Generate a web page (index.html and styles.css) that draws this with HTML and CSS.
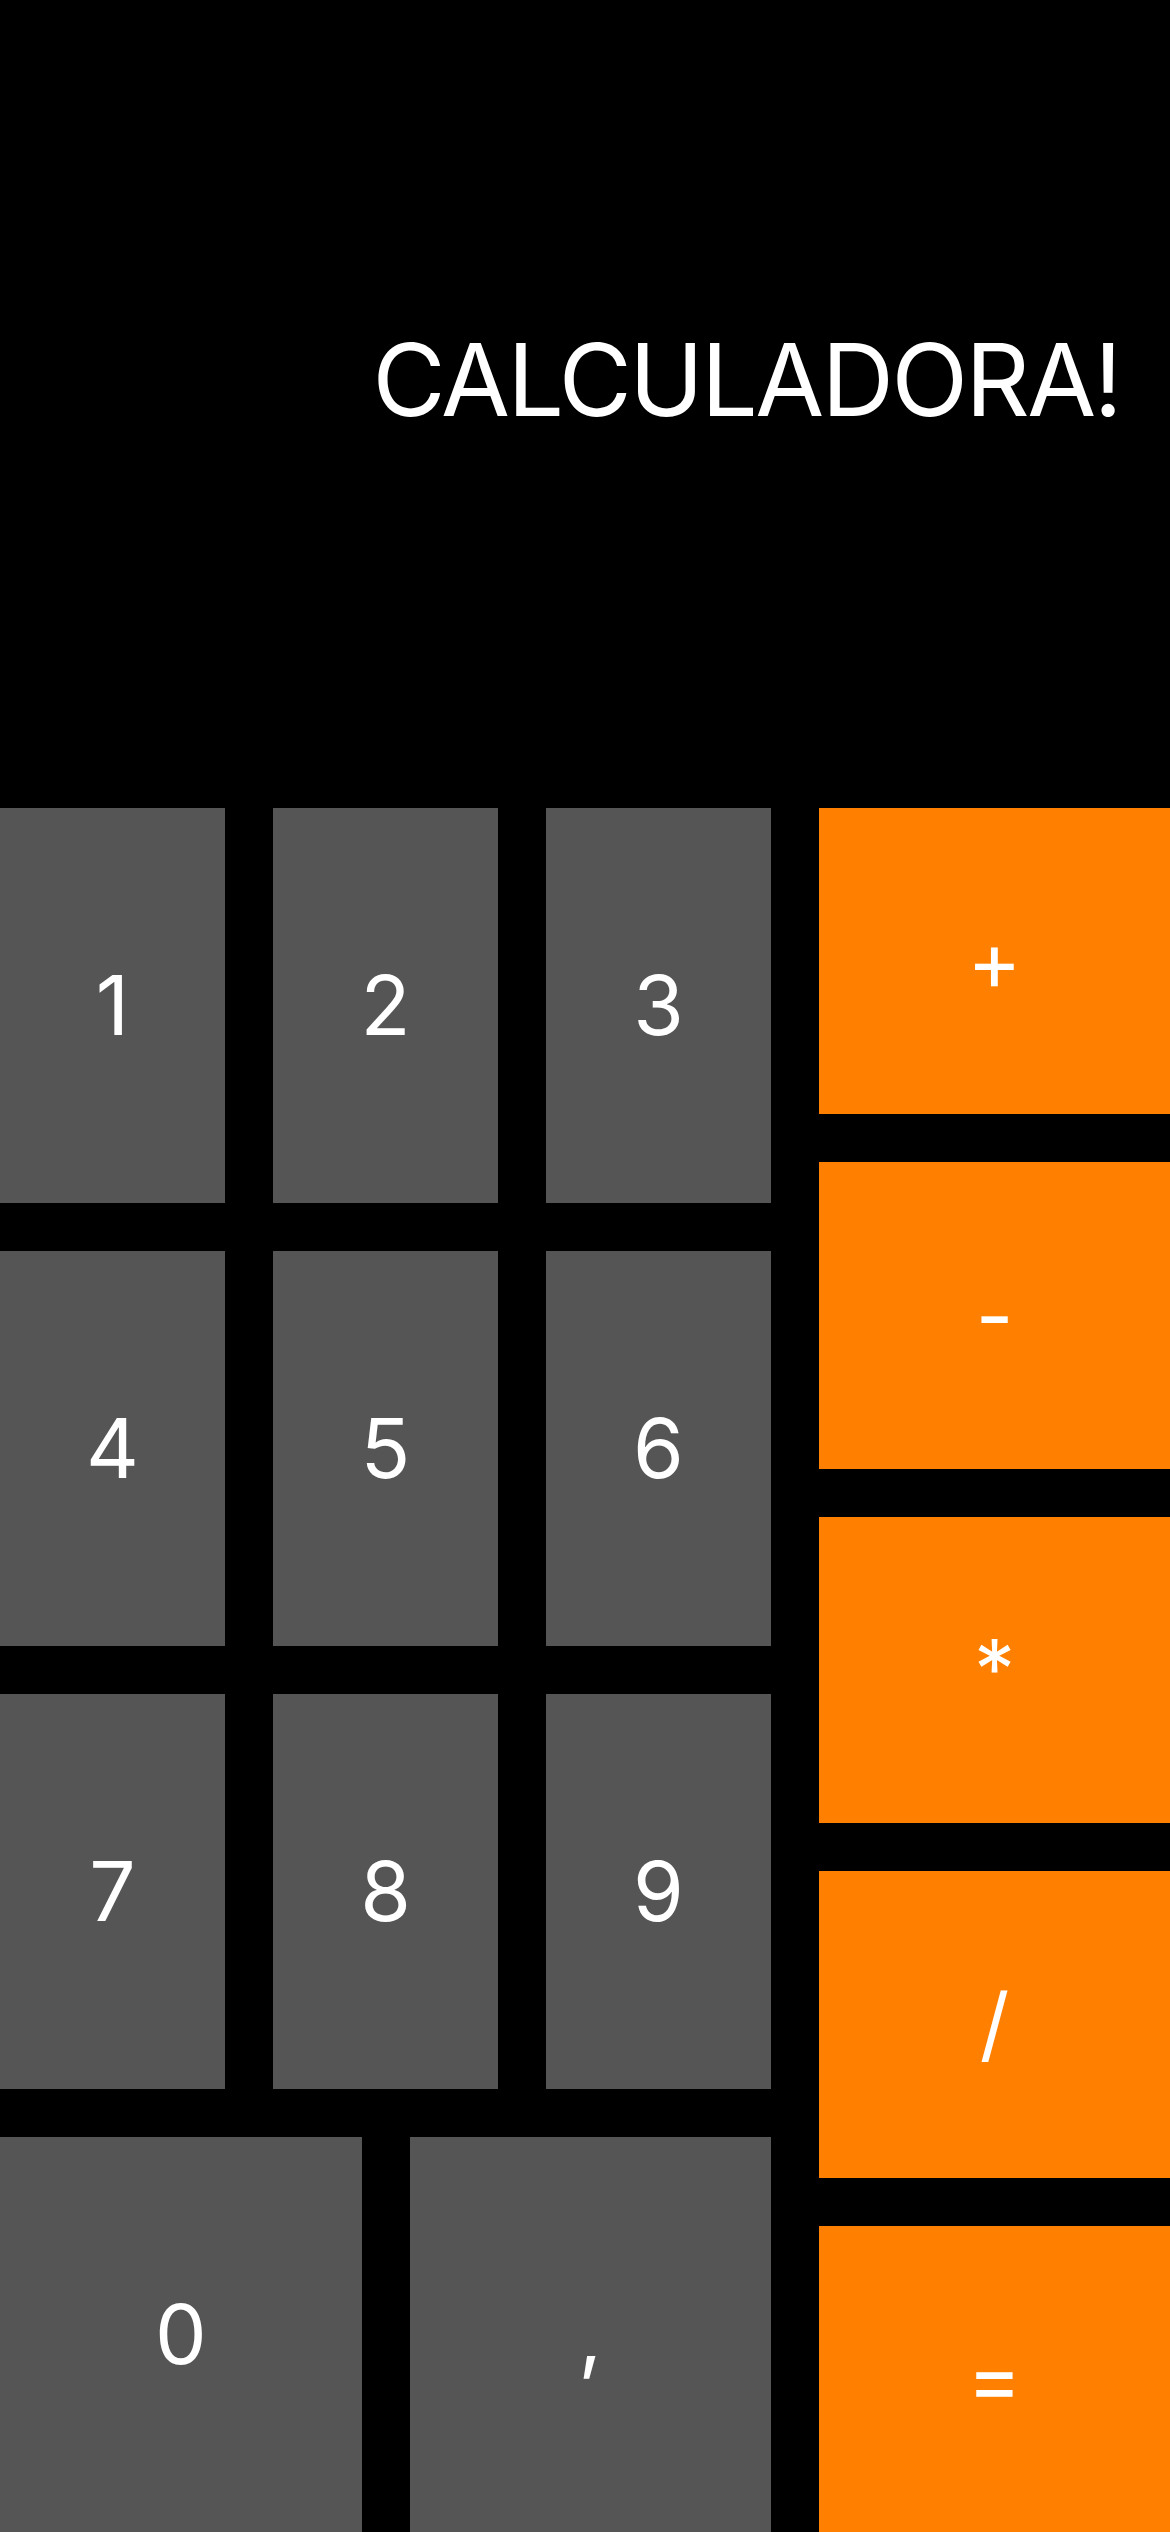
FILE: index.html
```html
<!DOCTYPE html>
<html lang="pt">
<head>
<meta charset="utf-8">
<title>Calculadora</title>
<link rel="stylesheet" href="styles.css">
</head>
<body>
<div class="screen">
  <div class="display"><span class="title">CALCULADORA!</span></div>
  <div class="keypad">
    <div class="digits">
      <button class="key">1</button>
      <button class="key">2</button>
      <button class="key">3</button>
      <button class="key">4</button>
      <button class="key">5</button>
      <button class="key">6</button>
      <button class="key">7</button>
      <button class="key">8</button>
      <button class="key">9</button>
      <button class="key wide">0</button>
      <button class="key wide">,</button>
    </div>
    <div class="ops">
      <button class="key op">+</button>
      <button class="key op">-</button>
      <button class="key op">*</button>
      <button class="key op">/</button>
      <button class="key op">=</button>
    </div>
  </div>
</div>
</body>
</html>
```

FILE: styles.css
```css
html, body {
  margin: 0;
  padding: 0;
  background: #000;
}
.screen {
  width: 1170px;
  height: 2532px;
  display: flex;
  flex-direction: column;
  overflow: hidden;
  background: #000;
  font-family: Inter, "Liberation Sans", sans-serif;
}
.display {
  height: 808px;
  box-sizing: border-box;
  display: flex;
  justify-content: flex-end;
  align-items: flex-start;
  padding: 330px 50px 0 0;
}
.title {
  color: #fff;
  font-size: 100px;
  line-height: 100px;
  font-weight: 400;
  letter-spacing: -2.5px;
}
.keypad {
  flex: 1;
  display: flex;
  gap: 48px;
}
.digits {
  width: 771px;
  display: grid;
  grid-template-columns: repeat(6, 1fr);
  grid-auto-rows: 395px;
  gap: 48px;
}
.key {
  border: 0;
  margin: 0;
  padding: 0;
  background: #555555;
  color: #fff;
  font-family: Inter, "Liberation Sans", sans-serif;
  font-size: 82px;
  font-weight: 400;
  line-height: 1;
  display: flex;
  align-items: center;
  justify-content: center;
  grid-column: span 2;
}
.key.wide {
  grid-column: span 3;
}
.ops {
  flex: 1;
  display: flex;
  flex-direction: column;
  gap: 48px;
}
.key.op {
  flex: 1;
  background: #ff8000;
}
```
